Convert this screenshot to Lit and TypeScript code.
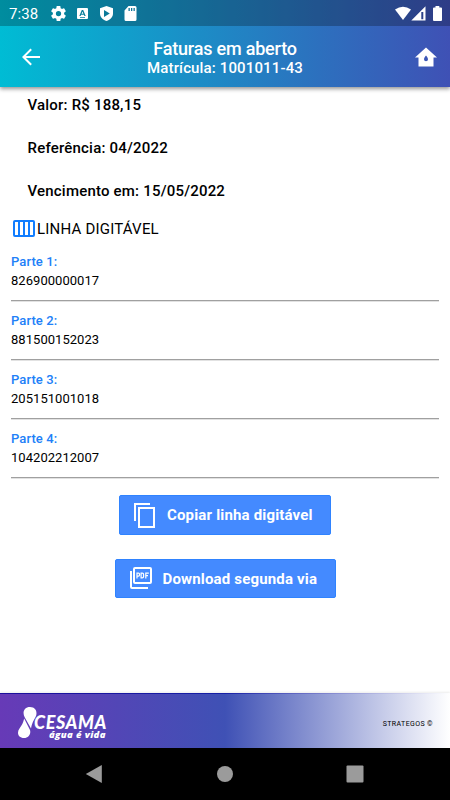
import { LitElement, html, css, svg } from "lit";
import { customElement } from "lit/decorators.js";

const icon = (cls: string, box: string, body: unknown) =>
  html`<svg class=${cls} viewBox=${box} fill="currentColor" aria-hidden="true">${body}</svg>`;

@customElement("app-root")
export class AppRoot extends LitElement {
  static styles = css`
    :host {
      display: flex;
      flex-direction: column;
      width: 450px;
      height: 800px;
      overflow: hidden;
      background: #fff;
      color: #000;
      font-family: Roboto, "Liberation Sans", sans-serif;
      white-space: nowrap;
    }
    svg { display: block; flex: none; }
    .top {
      flex: none;
      height: 87px;
      color: #fff;
      background: linear-gradient(90deg, #00bcd4, #3f51b5);
      box-shadow: 0 2px 4px rgba(0, 0, 0, 0.42);
    }
    .status {
      display: flex;
      align-items: center;
      height: 26px;
      box-sizing: border-box;
      padding: 0 7px 0 9px;
      background: rgba(0, 0, 0, 0.25);
    }
    .clock { font-size: 15px; width: 42px; letter-spacing: 0.1px; padding-top: 2px; }
    .gear { width: 15px; height: 15px; margin-right: 10px; }
    .key { width: 13px; height: 13px; margin-right: 9px; }
    .shield { width: 17px; height: 17px; margin-right: 8px; }
    .card { width: 15px; height: 15px; }
    .wifi { width: 18px; height: 15px; margin-left: auto; }
    .signal { width: 15px; height: 15px; margin: 0 6px 0 -1px; }
    .battery { width: 11px; height: 15px; }
    .bar {
      display: flex;
      align-items: center;
      height: 61px;
      box-sizing: border-box;
      padding: 0 12px 0 19px;
    }
    .back { width: 24px; height: 24px; }
    .home { width: 24px; height: 24px; }
    .titles { flex: 1; text-align: center; font-weight: 500; padding: 3px 7px 0 0; }
    .title { font-size: 18px; line-height: 20px; letter-spacing: -0.2px; }
    .subtitle { font-size: 15px; line-height: 19px; letter-spacing: 0.14px; }
    .content { flex: 1; min-height: 0; padding: 0 11px; }
    .facts { padding: 7.4px 0 0 16.5px; }
    .fact { height: 42.7px; line-height: 22px; font-size: 15px; font-weight: 500; letter-spacing: 0.2px; }
    .section { display: flex; align-items: center; height: 24px; margin-top: -5.5px; font-size: 15px; letter-spacing: 0.2px; }
    .columns { width: 26px; height: 24px; color: #117dff; }
    .parts { margin-top: 9px; }
    .part { height: 59px; box-sizing: border-box; }
    .label { color: #2180f8; font-size: 13px; font-weight: 500; line-height: 18px; padding-top: 3px; letter-spacing: 0.08px; }
    .value { font-size: 13px; line-height: 19px; letter-spacing: 0.04px; }
    .rule { height: 1px; margin-top: 10px; background: #a0a0a0; box-shadow: 0 1px 0 #e2e2e2; }
    .actions { display: flex; flex-direction: column; align-items: center; gap: 24px; margin-top: 9px; }
    .button {
      display: flex;
      align-items: center;
      box-sizing: border-box;
      height: 40px;
      border: 1px solid #2f83ff;
      border-radius: 2px;
      background: #448aff;
      color: #fff;
      font: 700 15px Roboto, "Liberation Sans", sans-serif;
      letter-spacing: 0.17px;
      padding: 0 0 0 13px;
    }
    .copy { width: 212px; }
    .download { width: 221px; height: 39px; padding-left: 12px; }
    .caption { padding-top: 1px; }
    .copy-icon { width: 24px; height: 26px; margin-right: 10px; }
    .pdf-icon { width: 26px; height: 26px; margin-right: 9px; }
    .footer {
      display: flex;
      align-items: center;
      justify-content: space-between;
      flex: none;
      height: 55px;
      box-sizing: border-box;
      padding: 4px 17px 0 17px;
      border: solid transparent;
      border-width: 1px 0 0;
      border-image: linear-gradient(90deg, #1d0f9c, #1620a6 50%, #fff) 1;
      background: linear-gradient(90deg, #673ab7, #3f51b5 50%, #fff);
      box-shadow: 0 -1px 2px rgba(0, 0, 0, 0.08);
    }
    .brand { display: flex; align-items: center; color: #fff; }
    .drops { width: 20px; height: 34px; }
    .words { display: flex; flex-direction: column; align-items: flex-end; margin-left: -3px; padding-top: 8px; }
    .name { font: italic 900 18px/14px Lato, sans-serif; letter-spacing: 0.55px; }
    .motto { font: italic 800 9.5px/10px "Open Sans", sans-serif; letter-spacing: 0.35px; margin: 1px 1px 0 0; }
    .maker { font-size: 7px; letter-spacing: 0.4px; padding-top: 1px; }
    .nav {
      display: flex;
      align-items: center;
      justify-content: space-between;
      flex: none;
      height: 52px;
      box-sizing: border-box;
      padding: 0 86px 0 85px;
      background: #000;
      color: #9b9b9b;
    }
    .nav-icon { width: 18px; height: 18px; }
  `;

  private facts = ["Valor: R$ 188,15", "Referência: 04/2022", "Vencimento em: 15/05/2022"];
  private parts = ["826900000017", "881500152023", "205151001018", "104202212007"];

  render() {
    return html`
      <header class="top">
        <div class="status">
          <span class="clock">7:38</span>
          ${icon("gear", "2 2 20 20", svg`<path d="M19.43 12.98c.04-.32.07-.64.07-.98s-.03-.66-.07-.98l2.11-1.65c.19-.15.24-.42.12-.64l-2-3.46c-.12-.22-.39-.3-.61-.22l-2.49 1c-.52-.4-1.08-.73-1.69-.98l-.38-2.65C14.46 2.18 14.25 2 14 2h-4c-.25 0-.46.18-.49.42l-.38 2.65c-.61.25-1.17.59-1.69.98l-2.49-1c-.23-.09-.49 0-.61.22l-2 3.46c-.13.22-.07.49.12.64l2.11 1.65c-.04.32-.07.65-.07.98s.03.66.07.98l-2.11 1.65c-.19.15-.24.42-.12.64l2 3.46c.12.22.39.3.61.22l2.49-1c.52.4 1.08.73 1.69.98l.38 2.65c.03.24.24.42.49.42h4c.25 0 .46-.18.49-.42l.38-2.65c.61-.25 1.17-.59 1.69-.98l2.49 1c.23.09.49 0 .61-.22l2-3.46c.12-.22.07-.49-.12-.64zM12 15.5a3.5 3.5 0 110-7 3.5 3.5 0 010 7z"/>`)}
          ${icon("key", "0 0 13 13", svg`<path fill-rule="evenodd" d="M2 1h9a1 1 0 011 1v9a1 1 0 01-1 1H2a1 1 0 01-1-1V2a1 1 0 011-1zM5.8 3L3.3 9h1.3l.5-1.3h2.8L8.4 9h1.3L7.2 3zM6.5 4.4l.9 2.3H5.6zM4 10v.8h5V10z"/>`)}
          ${icon("shield", "0 0 17 17", svg`<path fill-rule="evenodd" d="M8.5 1l6.5 2.2v5.2c0 3.6-2.5 6-6.5 7.6C4.5 14.4 2 12 2 8.400V3.200zM6 5v7l5.800-3.500z"/>`)}
          ${icon("card", "0 0 15 15", svg`<path fill-rule="evenodd" d="M5.500 0H12a1.500 1.500 0 011.500 1.500v12A1.500 1.500 0 0112 15H3a1.500 1.500 0 01-1.500-1.500V4.500zM5.500 2v3h1.300V2zm2.500 0v3h1.300V2zm2.500 0v3h1.300V2z"/>`)}
          ${icon("wifi", "0 0 18 15", svg`<path d="M1 3.500Q9-2 17 3.500L9 14z"/>`)}
          ${icon("signal", "0 0 15 15", svg`<path fill-rule="evenodd" d="M14.500 .300V14.500H.300zM10.300 6v7.300h2V6z"/>`)}
          ${icon("battery", "0 0 11 15", svg`<path d="M3.500 0h3.800v1.500H9a1 1 0 011 1V14a1 1 0 01-1 1H2a1 1 0 01-1-1V2.500a1 1 0 011-1h1.500z"/>`)}
        </div>
        <div class="bar">
          ${icon("back", "0 0 24 24", svg`<path d="M21 11H6.900l6-6L11.500 3.600 3 12l8.500 8.500 1.400-1.400-6-6.100H21z"/>`)}
          <div class="titles">
            <div class="title">Faturas em aberto</div>
            <div class="subtitle">Matrícula: 1001011-43</div>
          </div>
          ${icon("home", "0 0 24 24", svg`<path fill-rule="evenodd" d="M12 2.500L1 12.500h3.500V21.500h15v-9H23zM12 10.500c1.200 1.600 2 2.600 2 3.800a2 2 0 01-4 0c0-1.200.8-2.200 2-3.800z"/>`)}
        </div>
      </header>
      <main class="content">
        <div class="facts">${this.facts.map((f) => html`<div class="fact">${f}</div>`)}</div>
        <div class="section">
          ${icon("columns", "0 0 26 24", svg`<path fill-rule="evenodd" d="M4 3h18a2 2 0 012 2v13a2 2 0 01-2 2H4a2 2 0 01-2-2V5a2 2 0 012-2zM4 5v13h3V5zM9 5v13h3V5zM14 5v13h3V5zM19 5v13h3V5z"/>`)}
          <span>LINHA DIGITÁVEL</span>
        </div>
        <div class="parts">
          ${this.parts.map((p, i) => html`
            <div class="part">
              <div class="label">Parte ${i + 1}:</div>
              <div class="value">${p}</div>
              <div class="rule"></div>
            </div>`)}
        </div>
        <div class="actions">
          <button class="button copy">
            ${icon("copy-icon", "0 0 24 26", svg`<path fill-rule="evenodd" d="M1 1h16v2H3v16H1zM5 5h17v21H5zM7 7v17h13V7z"/>`)}
            <span class="caption">Copiar linha digitável</span>
          </button>
          <button class="button download">
            ${icon("pdf-icon", "0 0 26 26", svg`<path fill-rule="evenodd" d="M7 2h15a2 2 0 012 2v13a2 2 0 01-2 2H7a2 2 0 01-2-2V4a2 2 0 012-2zM7 4v13h15V4zM2 6v16a2 2 0 002 2h16v-2H4V6z"/><path fill="none" stroke="currentColor" stroke-width="1.200" d="M9 13.500V8.100h1.500q1 0 1 1v1q0 1-1 1H9M13.100 8.100h1.200q1.300 0 1.300 1.300v2.200q0 1.300-1.300 1.300h-1.200zM17.800 13.500V8.100h3M17.800 10.700h2.200"/>`)}
            <span class="caption">Download segunda via</span>
          </button>
        </div>
      </main>
      <footer class="footer">
        <div class="brand">
          ${icon("drops", "0 0 20 34", svg`<path d="M7.800 11.500C5 6.500 7 1 13 1c6.500 0 8 6.500 5 11C16 15.500 15 17.500 14 22.500zM7.200 12.500L13 24c1.200 4-1.500 8-6 8C1 32-.5 26.500 2.500 22.500 5 19 6 17 7.200 12.500z"/>`)}
          <div class="words">
            <span class="name">CESAMA</span>
            <span class="motto">água é vida</span>
          </div>
        </div>
        <span class="maker">STRATEGOS ©</span>
      </footer>
      <nav class="nav">
        ${icon("nav-icon", "0 0 18 18", svg`<path d="M.800 9L16.800 0v18z"/>`)}
        ${icon("nav-icon", "0 0 18 18", svg`<circle cx="9" cy="9" r="8"/>`)}
        ${icon("nav-icon", "0 0 18 18", svg`<rect x=".500" y=".500" width="17" height="17" rx="1"/>`)}
      </nav>
    `;
  }
}
